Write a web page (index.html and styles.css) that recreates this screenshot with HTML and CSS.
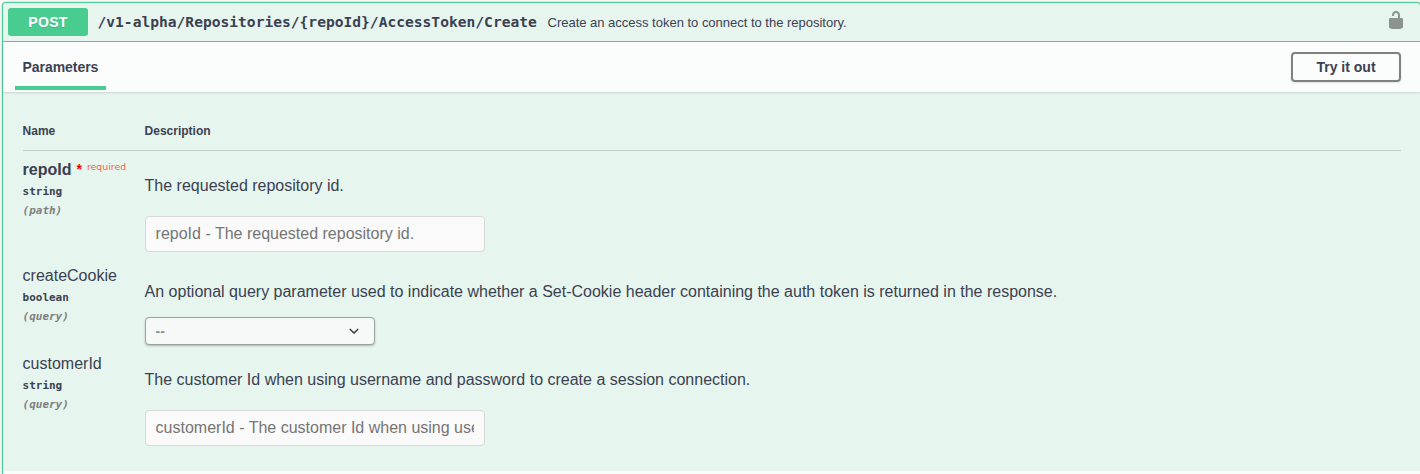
FILE: index.html
```html
<!DOCTYPE html>
<html lang="en">
<head>
<meta charset="utf-8">
<title>Create access token</title>
<link rel="stylesheet" href="styles.css">
</head>
<body>
<section class="opblock">
  <header class="summary">
    <span class="method">POST</span>
    <span class="path">/v1-alpha/Repositories/{repoId}/AccessToken/Create</span>
    <span class="summary-text">Create an access token to connect to the repository.</span>
    <svg class="lock" viewBox="0 0 20 20" width="20" height="20"><path d="M15.8 8H14V5.6C14 2.703 12.665 1 10 1 7.334 1 6 2.703 6 5.6V6h2v-.801C8 3.754 8.797 3 10 3c1.203 0 2 .754 2 2.199V8H4c-.553 0-1 .646-1 1.199V17c0 .549.428 1.139.951 1.307l1.197.387C5.672 18.861 6.55 19 7.1 19h5.8c.549 0 1.428-.139 1.951-.307l1.196-.387c.524-.167.953-.757.953-1.306V9.199C17 8.646 16.352 8 15.8 8z"/></svg>
  </header>
  <div class="section-header">
    <h4 class="tab">Parameters</h4>
    <button class="try">Try it out</button>
  </div>
  <div class="params">
    <div class="row head"><span>Name</span><span>Description</span></div>
    <div class="row first">
      <div class="name-col">
        <div class="name required">repoId<span class="star">*</span><span class="req">required</span></div>
        <div class="type">string</div>
        <div class="in">(path)</div>
      </div>
      <div class="desc">
        <p>The requested repository id.</p>
        <input type="text" placeholder="repoId - The requested repository id." disabled>
      </div>
    </div>
    <div class="row second">
      <div class="name-col">
        <div class="name">createCookie</div>
        <div class="type">boolean</div>
        <div class="in">(query)</div>
      </div>
      <div class="desc">
        <p>An optional query parameter used to indicate whether a Set-Cookie header containing the auth token is returned in the response.</p>
        <div class="select"><span>--</span><svg viewBox="0 0 20 20" width="20" height="20"><path d="M13.418 7.859c.271-.268.709-.268.978 0 .27.268.272.701 0 .969l-3.908 3.83c-.27.268-.707.268-.979 0l-3.908-3.83c-.27-.267-.27-.701 0-.969.271-.268.709-.268.978 0L10 11z"/></svg></div>
      </div>
    </div>
    <div class="row third">
      <div class="name-col">
        <div class="name">customerId</div>
        <div class="type">string</div>
        <div class="in">(query)</div>
      </div>
      <div class="desc">
        <p>The customer Id when using username and password to create a session connection.</p>
        <input type="text" placeholder="customerId - The customer Id when using username and password to create a session connection." disabled>
      </div>
    </div>
  </div>
  <div class="next-section"></div>
</section>
</body>
</html>
```
FILE: styles.css
```css
* { box-sizing: border-box; }
body {
  margin: 0;
  height: 474px;
  padding: 2px 0 0 2px;
  overflow: hidden;
  background: #fafafa;
  color: #3b4151;
  font-family: "Liberation Sans", Arial, sans-serif;
}
.opblock {
  width: 1419px;
  height: 472px;
  border: 1px solid #49cc90;
  border-bottom: 0;
  border-radius: 4px 4px 0 0;
  background: #e6f5ee;
  box-shadow: 0 0 3px rgba(0, 0, 0, .19);
}
.summary {
  position: relative;
  z-index: 1;
  display: flex;
  align-items: center;
  height: 39px;
  padding: 0 14px 0 5px;
  border-bottom: 1px solid #49cc90;
}
.method {
  width: 80px;
  height: 28px;
  border-radius: 3px;
  background: #49cc90;
  color: #fff;
  font-size: 14px;
  font-weight: 700;
  letter-spacing: .3px;
  line-height: 28px;
  text-align: center;
  text-shadow: 0 1px 0 rgba(0, 0, 0, .1);
}
.path {
  margin-left: 9.5px;
  width: 440px;
  font: 700 14.6px/20px "DejaVu Sans Mono", monospace;
  white-space: nowrap;
}
.summary-text { margin-left: 10px; font-size: 13px; letter-spacing: -.01px; }
.lock { margin: -4px 0 0 auto; fill: #8b9490; }
.section-header {
  display: flex;
  justify-content: space-between;
  height: 50px;
  padding: 10px 19px 0 12px;
  background: #fbfdfc;
  box-shadow: 0 1px 2px rgba(0, 0, 0, .13);
}
.tab {
  width: 91px;
  height: 38px;
  margin: 0;
  padding-left: 7.5px;
  border-bottom: 4px solid #49cc90;
  font-size: 14px;
  letter-spacing: -.05px;
  line-height: 30px;
}
.try {
  width: 110px;
  height: 30px;
  padding: 0;
  border: 2px solid #808080;
  border-radius: 4px;
  background: transparent;
  box-shadow: 0 1px 2px rgba(0, 0, 0, .1);
  color: #3b4151;
  font: 700 14px "Liberation Sans", Arial, sans-serif;
}
.params { height: 379px; padding: 20px 19px 0 19.6px; }
.row { display: grid; grid-template-columns: 122px 1fr; }
.head {
  height: 39px;
  border-bottom: 1px solid #c2d1ca;
  font-size: 12px;
  font-weight: 700;
  line-height: 38px;
}
.first { height: 106px; padding-top: 9px; }
.second { height: 88px; padding-top: 9px; }
.third { padding-top: 9px; }
.name { height: 20px; font-size: 16px; line-height: 20px; white-space: nowrap; }
.required { display: flex; font-weight: 700; }
.star { margin-left: 5px; color: #f00; font-size: 14px; line-height: 19px; }
.req { margin-left: 5px; color: #ff5a52; font: 400 9.4px/13px "DejaVu Sans", sans-serif; }
.type, .in { font: 700 10.97px/20px "DejaVu Sans Mono", monospace; }
.type { margin-top: 2px; }
.in { margin-top: -1px; color: #808080; font-style: italic; }
.desc p { margin: 16px 0 0; font-size: 16px; line-height: 20px; }
input {
  display: block;
  width: 340px;
  height: 36px;
  margin-top: 20px;
  padding: 0 10px;
  border: 1px solid #d9d9d9;
  border-radius: 4px;
  background: #fafafa;
  font: 16px "Liberation Sans", Arial, sans-serif;
}
input::placeholder { color: #757575; }
.select {
  display: flex;
  align-items: center;
  justify-content: space-between;
  width: 230px;
  height: 28px;
  margin-top: 15px;
  padding: 0 10px;
  border: 1px solid #9aa19e;
  border-radius: 4px;
  background: #f5f9f8;
  box-shadow: 0 1px 2px rgba(0, 0, 0, .25);
  color: #8c9092;
  font-size: 14px;
  font-weight: 700;
}
.select svg { fill: #3c403e; }
.next-section { height: 3px; background: #fbfdfc; }
```
